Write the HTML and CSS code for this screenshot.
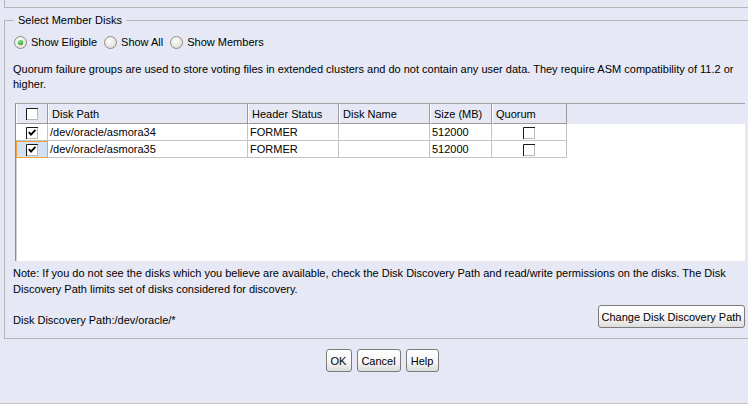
FILE: index.html
```html
<!DOCTYPE html>
<html>
<head>
<meta charset="utf-8">
<title>Select Member Disks</title>
<link rel="stylesheet" href="styles.css">
</head>
<body>
<div class="top-panel"></div>
<fieldset class="group">
  <legend>Select Member Disks</legend>
  <div class="radios">
    <label class="radio">
      <svg width="13" height="13" viewBox="0 0 13 13"><defs><radialGradient id="rf" cx="0.4" cy="0.35" r="0.7"><stop offset="0" stop-color="#ffffff"/><stop offset="1" stop-color="#dedbd0"/></radialGradient><radialGradient id="gd" cx="0.4" cy="0.35" r="0.7"><stop offset="0" stop-color="#8ee08a"/><stop offset="1" stop-color="#21a121"/></radialGradient></defs><circle cx="6.5" cy="6.5" r="6" fill="url(#rf)" stroke="#8c8c86"/><circle cx="6.5" cy="6.5" r="2.6" fill="url(#gd)"/></svg>
      <span>Show Eligible</span>
    </label>
    <label class="radio">
      <svg width="13" height="13" viewBox="0 0 13 13"><circle cx="6.5" cy="6.5" r="6" fill="url(#rf)" stroke="#8c8c86"/></svg>
      <span>Show All</span>
    </label>
    <label class="radio">
      <svg width="13" height="13" viewBox="0 0 13 13"><circle cx="6.5" cy="6.5" r="6" fill="url(#rf)" stroke="#8c8c86"/></svg>
      <span>Show Members</span>
    </label>
  </div>
  <p class="info">Quorum failure groups are used to store voting files in extended clusters and do not contain any user data. They require ASM compatibility of 11.2 or higher.</p>
  <div class="scroll">
    <table class="disks">
      <colgroup><col class="c1"><col class="c2"><col class="c3"><col class="c4"><col class="c5"><col class="c6"></colgroup>
      <thead>
        <tr>
          <th class="center"><svg class="cb" width="12" height="12" viewBox="0 0 12 12"><rect x="0" y="0" width="12" height="12" fill="#fff"/><path d="M0.5 12V0.5H12" fill="none" stroke="#1a1a1a"/><path d="M11.5 1V11.5H1" fill="none" stroke="#b8b8b8"/></svg></th>
          <th>Disk Path</th>
          <th>Header Status</th>
          <th>Disk Name</th>
          <th>Size (MB)</th>
          <th>Quorum</th>
        </tr>
      </thead>
      <tbody>
        <tr>
          <td class="center"><svg class="cb" width="12" height="12" viewBox="0 0 12 12"><rect x="0" y="0" width="12" height="12" fill="#fff"/><path d="M0.5 12V0.5H12" fill="none" stroke="#1a1a1a"/><path d="M11.5 1V11.5H1" fill="none" stroke="#b8b8b8"/><path d="M2.8 5.2L5 7.6L9.4 2.8" fill="none" stroke="#000" stroke-width="1.9"/></svg></td>
          <td>/dev/oracle/asmora34</td>
          <td>FORMER</td>
          <td></td>
          <td>512000</td>
          <td class="center"><svg class="cb" width="12" height="12" viewBox="0 0 12 12"><rect x="0" y="0" width="12" height="12" fill="#fff"/><path d="M0.5 12V0.5H12" fill="none" stroke="#1a1a1a"/><path d="M11.5 1V11.5H1" fill="none" stroke="#b8b8b8"/></svg></td>
        </tr>
        <tr>
          <td class="center focus"><svg class="cb" width="12" height="12" viewBox="0 0 12 12"><rect x="0" y="0" width="12" height="12" fill="#fff"/><path d="M0.5 12V0.5H12" fill="none" stroke="#1a1a1a"/><path d="M11.5 1V11.5H1" fill="none" stroke="#b8b8b8"/><path d="M2.8 5.2L5 7.6L9.4 2.8" fill="none" stroke="#000" stroke-width="1.9"/></svg></td>
          <td>/dev/oracle/asmora35</td>
          <td>FORMER</td>
          <td></td>
          <td>512000</td>
          <td class="center"><svg class="cb" width="12" height="12" viewBox="0 0 12 12"><rect x="0" y="0" width="12" height="12" fill="#fff"/><path d="M0.5 12V0.5H12" fill="none" stroke="#1a1a1a"/><path d="M11.5 1V11.5H1" fill="none" stroke="#b8b8b8"/></svg></td>
        </tr>
      </tbody>
    </table>
  </div>
  <p class="note">Note: If you do not see the disks which you believe are available, check the Disk Discovery Path and read/write permissions on the disks. The Disk Discovery Path limits set of disks considered for discovery.</p>
  <div class="path-row">
    <span class="path-label">Disk Discovery Path:/dev/oracle/*</span>
    <button class="btn wide">Change Disk Discovery Path</button>
  </div>
</fieldset>
<div class="actions">
  <button class="btn ok">OK</button>
  <button class="btn cancel">Cancel</button>
  <button class="btn help">Help</button>
</div>
<div class="bottom-rule"></div>
</body>
</html>
```

FILE: styles.css
```css
* { box-sizing: border-box; }
html, body { margin: 0; }
body {
  width: 748px;
  height: 404px;
  overflow: hidden;
  background: #e6e9f5;
  font-family: "Liberation Sans", Arial, sans-serif;
  font-size: 11px;
  color: #000;
}
.top-panel {
  margin-left: 4px;
  height: 8px;
  border-left: 1px solid #b6b6b6;
  border-bottom: 1px solid #b6b6b6;
}
.group {
  margin: 6px 0 0 4px;
  padding: 9px 3px 10px 0;
  border: 1px solid #b6b6b6;
  border-right: 0;
  min-width: 0;
}
.group legend {
  margin-left: 9px;
  padding: 0 4px;
  line-height: 13px;
  font-size: 11px;
}
.radios {
  display: flex;
  align-items: center;
  height: 13px;
  margin-left: 9px;
}
.radio {
  display: flex;
  align-items: center;
  gap: 4px;
  margin-right: 7px;
  line-height: 13px;
}
.radio svg { display: block; }
.info {
  margin: 13px 0 0 8px;
  line-height: 15px;
}
.scroll {
  margin: 11px 0 0 10px;
  height: 158px;
  border-top: 1px solid #a4a4a4;
  border-left: 1px solid #8e8e8e;
  box-shadow: inset 1px 0 0 #d0d0d0;
  background: linear-gradient(#e6e9f5 0, #e6e9f5 20px, #ffffff 20px);
}
.disks {
  table-layout: fixed;
  width: 551px;
  border-collapse: separate;
  border-spacing: 0;
  font-size: 11px;
}
.c1 { width: 32px; }
.c2 { width: 200px; }
.c3 { width: 91px; }
.c4 { width: 91px; }
.c5 { width: 62px; }
.c6 { width: 75px; }
.disks th {
  height: 20px;
  padding: 0 0 0 3px;
  text-align: left;
  font-weight: normal;
  background: #e6e9f5;
  border-left: 1px solid #ffffff;
  border-right: 1px solid #9a9a9a;
  border-bottom: 1px solid #9a9a9a;
  white-space: nowrap;
}
.disks td {
  height: 17px;
  padding: 0 0 0 2px;
  background: #fff;
  border-right: 1px solid #c4c4c4;
  border-bottom: 1px solid #c4c4c4;
  white-space: nowrap;
}
.disks .center { text-align: center; padding: 0; }
.cb { display: inline-block; vertical-align: middle; }
.disks td.focus {
  background: #d3e0f3;
  outline: 1px solid #f0a336;
  outline-offset: -1px;
}
.note {
  margin: 4px 0 0 8px;
  line-height: 16px;
}
.path-row {
  display: flex;
  justify-content: space-between;
  align-items: flex-end;
  margin: 8px 0 0 8px;
}
.path-label { line-height: 15px; }
.btn {
  height: 23px;
  padding: 0;
  border: 1px solid #7c7c7c;
  border-radius: 3px;
  background: linear-gradient(#ffffff, #f6f6f6 55%, #dcdcdc);
  font-family: "Liberation Sans", Arial, sans-serif;
  font-size: 11px;
  color: #000;
  white-space: nowrap;
  text-align: center;
}
.btn.wide { width: 147px; }
.btn.ok { width: 26px; }
.btn.cancel { width: 44px; }
.btn.help { width: 33px; }
.actions {
  display: flex;
  justify-content: center;
  gap: 5px;
  margin-top: 10px;
  padding-left: 16px;
}
.bottom-rule {
  margin-top: 31px;
  border-top: 1px solid #c4c4c4;
}
```
